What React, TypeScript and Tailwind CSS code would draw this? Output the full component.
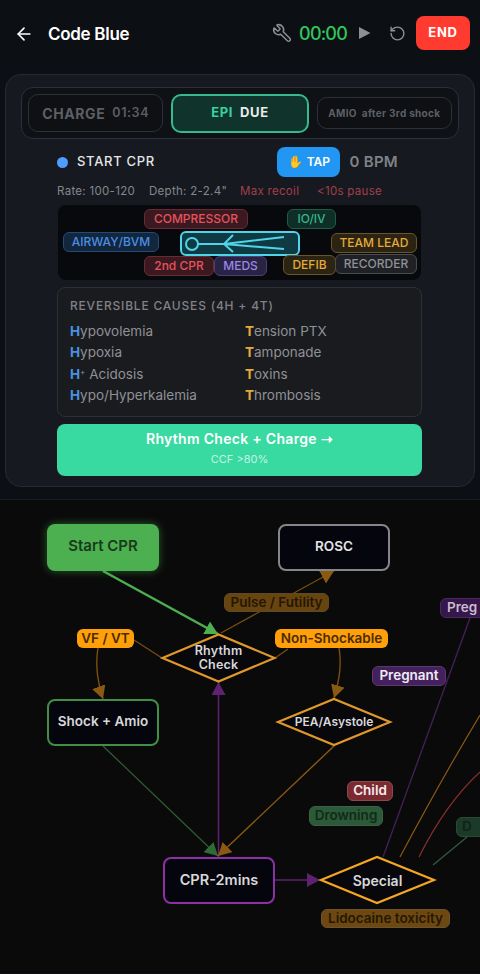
import { ArrowLeft, RotateCcw, Wrench } from 'lucide-react'

const font = "font-['Inter',sans-serif]"

function Chip({ label, className }: { label: string; className: string }) {
  return (
    <div className={`absolute flex h-5 items-center justify-center rounded-md border text-[12px] font-medium ${className}`}>
      {label}
    </div>
  )
}

function Cause({ letter, rest, color }: { letter: string; rest: React.ReactNode; color: string }) {
  return (
    <div className="h-[21.3px] text-[13.5px] leading-[21px] text-[#8f9196]">
      <span className={`font-bold ${color}`}>{letter}</span>
      {rest}
    </div>
  )
}

function Tag({ label, className }: { label: string; className: string }) {
  return (
    <div className={`absolute flex items-center justify-center whitespace-nowrap rounded-md text-[13.5px] font-semibold leading-none ${className}`}>
      {label}
    </div>
  )
}

function NodeBox({ label, className }: { label: string; className: string }) {
  return (
    <div className={`absolute flex h-[47px] w-[112px] items-center justify-center rounded-lg pb-[2px] font-semibold ${className}`}>
      {label}
    </div>
  )
}

function Arrow({ id, color }: { id: string; color: string }) {
  return (
    <marker id={id} markerWidth="13" markerHeight="14" refX="13" refY="7" orient="auto" markerUnits="userSpaceOnUse">
      <path d="M0 0L13 7L0 14Z" fill={color} />
    </marker>
  )
}

function Flow() {
  return (
    <div className="relative h-[474px] overflow-hidden border-t border-[#1b1d21] bg-[#0a0a0a]">
      <svg className="absolute left-0 top-0" width="480" height="474" viewBox="0 500 480 474" fill="none">
        <defs>
          <Arrow id="green" color="#4caf50" />
          <Arrow id="dgreen" color="#2f6b33" />
          <Arrow id="orange" color="#8a5a12" />
          <Arrow id="purple" color="#5f2272" />
        </defs>
        <path d="M103 571L218 634" stroke="#4caf50" strokeWidth="2.5" markerEnd="url(#green)" />
        <path d="M221 633L334 571" stroke="#7a4f10" strokeWidth="1.2" markerEnd="url(#orange)" />
        <path d="M162 658L134 640" stroke="#7a4f10" strokeWidth="1.2" />
        <path d="M98 648C95 665 98 685 103 699" stroke="#7a4f10" strokeWidth="1.4" markerEnd="url(#orange)" />
        <path d="M275 658L288 649" stroke="#7a4f10" strokeWidth="1.2" />
        <path d="M339 648C342 665 339 682 334 698" stroke="#7a4f10" strokeWidth="1.4" markerEnd="url(#orange)" />
        <path d="M218.500 857L218.500 682" stroke="#5f2272" strokeWidth="1.5" markerEnd="url(#purple)" />
        <path d="M103 746L218 856" stroke="#2f5f32" strokeWidth="1.2" markerEnd="url(#dgreen)" />
        <path d="M334 746L218 856" stroke="#8a5a12" strokeWidth="1.4" markerEnd="url(#orange)" />
        <path d="M274 880L320 880" stroke="#5f2272" strokeWidth="1.5" markerEnd="url(#purple)" />
        <path d="M383 857L470 618" stroke="#45205a" strokeWidth="1.3" />
        <path d="M400 857C425 810 450 765 480 715" stroke="#8a5a12" strokeWidth="1.2" />
        <path d="M419 857C435 825 455 795 480 772" stroke="#8a3030" strokeWidth="1.2" />
        <path d="M433 865L467 837" stroke="#2f5f40" strokeWidth="1.2" />
        <path d="M162.500 658L218.500 634.500L274.500 658L218.500 681.500Z" fill="#07070c" stroke="#e0982a" strokeWidth="2.2" />
        <path d="M278 722L334 699L390 722L334 745Z" fill="#07070c" stroke="#e0982a" strokeWidth="2.2" />
        <path d="M321 880L377 857L434 880L377 903Z" fill="#07070c" stroke="#f5a623" strokeWidth="2.2" />
      </svg>

      <NodeBox label="Start CPR" className="left-[47px] top-[24px] bg-[#4caf50] text-[15px] text-[#1a3a1c] shadow-[0_0_8px_rgba(76,175,80,0.5)]" />
      <NodeBox label="ROSC" className="left-[278px] top-[24px] border-2 border-[#85868a] bg-[#05050d] text-[13.5px] text-[#e4e4e6]" />
      <NodeBox label="Shock + Amio" className="left-[47px] top-[199px] border-2 border-[#3f8f45] bg-[#05050d] text-[13.5px] text-[#d8d8da]" />
      <NodeBox label="CPR-2mins" className="left-[163px] top-[357px] border-2 border-[#8e2fa5] bg-[#05050d] text-[14.5px] text-[#d8d8da]" />

      <div className="absolute left-[162px] top-[134px] flex h-[48px] w-[113px] items-center justify-center text-center text-[12.5px] font-semibold leading-[14px] tracking-[0.2px] text-[#d8d8da]">
        Rhythm
        <br />
        Check
      </div>
      <div className="absolute left-[277px] top-[198px] flex h-[48px] w-[114px] items-center justify-center text-[12px] font-semibold text-[#d8d8da]">
        PEA/Asystole
      </div>
      <div className="absolute left-[320px] top-[356px] flex h-[48px] w-[115px] items-center justify-center text-[14px] font-semibold text-[#d8d8da]">
        Special
      </div>

      <Tag label="Pulse / Futility" className="left-[224px] top-[93px] h-[19px] w-[105px] border border-[#5d4a2a] bg-[#68440f] text-[#241804]" />
      <Tag label="VF / VT" className="left-[77px] top-[129px] h-[19px] w-[57px] bg-[#ff9f0a] text-[#4a2c00]" />
      <Tag label="Non-Shockable" className="left-[275px] top-[129px] h-[19px] w-[113px] bg-[#ff9f0a] text-[#4a2c00]" />
      <Tag label="Preg" className="left-[440px] top-[98px] h-[20px] w-[60px] justify-start border border-[#4a2a60] bg-[#36174a] pl-[6px] text-[#c9bcd0]" />
      <Tag label="Pregnant" className="left-[372px] top-[166px] h-[20px] w-[74px] border border-[#5a3a72] bg-[#44205c] text-[#f0eaf4]" />
      <Tag label="Child" className="left-[347px] top-[281px] h-[20px] w-[46px] border border-[#8a4a50] bg-[#7c2a32] text-[#f5ecec]" />
      <Tag label="Drowning" className="left-[309px] top-[306px] h-[20px] w-[74px] border border-[#3f5f48] bg-[#2a5a38] text-[#122a18]" />
      <Tag label="D" className="left-[456px] top-[317px] h-[20px] w-[40px] justify-start border border-[#2a4a36] bg-[#1c3a28] pl-[5px] text-[#0f2416]" />
      <Tag label="Lidocaine toxicity" className="left-[321px] top-[409px] h-[19px] w-[129px] border border-[#6a5530] bg-[#6e4810] text-[#241804]" />
    </div>
  )
}

export default function App() {
  return (
    <div className={`h-[974px] w-[480px] overflow-hidden bg-[#0c0f14] ${font}`}>
      <header className="flex h-[66px] items-center pl-[14px] pr-[10px]">
        <ArrowLeft className="mt-[1px] size-[20px] text-white" strokeWidth={2} />
        <h1 className="ml-[14px] mt-[3px] text-[17px] font-semibold tracking-[-0.3px] text-white">Code Blue</h1>
        <div className="ml-auto flex items-center">
          <Wrench className="size-[20px] -scale-x-100 text-[#8e8e93]" strokeWidth={1.8} />
          <span className="ml-[7px] text-[18px] font-medium tracking-[-0.8px] text-[#30c85a]">00:00</span>
          <svg className="ml-[12px]" width="12" height="14" viewBox="0 0 12 14">
            <path d="M0 1L11.500 7L0 13Z" fill="#8e8e93" />
          </svg>
          <RotateCcw className="ml-[18px] size-[17px] text-[#8e8e93]" strokeWidth={2} />
          <button className="ml-[10px] h-[34px] w-[54px] rounded-lg bg-[#ff3b30] text-[13px] font-bold tracking-[0.8px] text-white">END</button>
        </div>
      </header>

      <section className="mx-[5px] mt-[8px] h-[413px] rounded-2xl border border-[#272a30] bg-[#16191f] px-[15px] pt-[12px]">
        <div className="flex h-[52px] items-center gap-[8px] rounded-xl border border-[#2d3036] bg-[#0e1116] px-[6px]">
          <div className="flex h-[38px] flex-1 items-center justify-center gap-[7px] rounded-[10px] border border-[#2d3036] bg-[#0e1014] font-bold text-[#5c5f64]">
            <span className="text-[14px] tracking-[0.6px]">CHARGE</span>
            <span className="text-[12.5px] font-semibold tracking-[0.6px]">01:34</span>
          </div>
          <div className="flex h-[39px] flex-1 items-center justify-center gap-[7px] rounded-[10px] border-2 border-[#36b98d] bg-[#10332c] text-[13px] font-bold tracking-[0.6px]">
            <span className="text-[#38d39f]">EPI</span>
            <span className="text-[#e8ecea]">DUE</span>
          </div>
          <div className="flex h-[32px] flex-1 items-center justify-center gap-[5px] rounded-[10px] border border-[#2d3036] bg-[#0e1014] text-[10px] font-bold tracking-[0.3px] text-[#5c5f64]">
            <span>AMIO</span>
            <span>after 3rd shock</span>
          </div>
        </div>

        <div className="mt-[8px] flex h-[30px] items-center pl-[36px]">
          <span className="size-[11px] rounded-full bg-[#4f9dff]" />
          <span className="ml-[9px] text-[13px] font-medium tracking-[0.7px] text-[#e4e6e8]">START CPR</span>
          <button className="ml-auto flex h-[30px] w-[63px] items-center justify-center gap-[4px] rounded-lg bg-[#2196f3] text-[12px] font-semibold text-white">
            <span className="text-[12px]">✋</span>TAP
          </button>
          <span className="ml-[9px] mr-[61px] text-[15px] font-semibold tracking-[0.3px] text-[#808287]">0 BPM</span>
        </div>

        <div className="mt-[7px] flex h-[16px] items-center pl-[36px] text-[11.500px] tracking-[0.3px] text-[#85878c]">
          <span className="w-[92px]">Rate: 100-120</span>
          <span className="w-[91px]">Depth: 2-2.4"</span>
          <span className="w-[77px] text-[#a3404a]">Max recoil</span>
          <span className="text-[#a3404a]">&lt;10s pause</span>
        </div>

        <div className="relative ml-[37px] mt-[5px] h-[75px] w-[363px] rounded-lg bg-[#07090d]">
          <Chip label="COMPRESSOR" className="left-[86px] top-[4px] w-[104px] border-[#6b2a32] bg-[#3a1a20] text-[#e5535c]" />
          <Chip label="IO/IV" className="left-[229px] top-[4px] w-[49px] border-[#1c5c48] bg-[#0f2e26] text-[#35b58d]" />
          <Chip label="AIRWAY/BVM" className="left-[5px] top-[27px] w-[96px] border-[#234a75] bg-[#12263e] text-[#4a90e2]" />
          <div className="absolute left-[122px] top-[26px] h-[25px] w-[120px] rounded-md border-2 border-[#4fd4e8] bg-[#0f3a44]">
            <svg className="absolute left-0 top-0" width="116" height="21" viewBox="0 0 116 21" fill="none" stroke="#4fd4e8" strokeWidth="2">
              <circle cx="10" cy="11" r="6" />
              <path d="M16 11H42M51 2L42 11L51 19M42 11L102 4M42 11L102 16" />
            </svg>
          </div>
          <Chip label="TEAM LEAD" className="left-[273px] top-[28px] w-[86px] border-[#6b5526] bg-[#2c2412] text-[#e5a93c]" />
          <Chip label="2nd CPR" className="left-[86px] top-[51px] w-[70px] border-[#6b2a32] bg-[#3a1a20] text-[#e5535c]" />
          <Chip label="MEDS" className="left-[156px] top-[51px] w-[53px] border-[#4a3f78] bg-[#2a2444] text-[#9c84e8]" />
          <Chip label="DEFIB" className="left-[225px] top-[50px] w-[53px] border-[#6b5526] bg-[#2c2412] text-[#e5a93c]" />
          <Chip label="RECORDER" className="left-[277px] top-[49px] w-[82px] border-[#4a4c52] bg-[#1f2126] text-[#8f9196]" />
        </div>

        <div className="ml-[36px] mt-[7px] h-[130px] w-[365px] rounded-lg border border-[#2e3035] bg-[#1a1b1f] px-[12px] pt-[9px]">
          <div className="text-[12px] font-medium tracking-[0.8px] text-[#808287]">REVERSIBLE CAUSES (4H + 4T)</div>
          <div className="mt-[6px] grid grid-cols-[175px_1fr]">
            <div>
              <Cause letter="H" rest="ypovolemia" color="text-[#4a90e2]" />
              <Cause letter="H" rest="ypoxia" color="text-[#4a90e2]" />
              <Cause letter="H" rest={<><sup className="text-[8px]">+</sup> Acidosis</>} color="text-[#4a90e2]" />
              <Cause letter="H" rest="ypo/Hyperkalemia" color="text-[#4a90e2]" />
            </div>
            <div>
              <Cause letter="T" rest="ension PTX" color="text-[#e5a93c]" />
              <Cause letter="T" rest="amponade" color="text-[#e5a93c]" />
              <Cause letter="T" rest="oxins" color="text-[#e5a93c]" />
              <Cause letter="T" rest="hrombosis" color="text-[#e5a93c]" />
            </div>
          </div>
        </div>

        <button className="ml-[36px] mt-[7px] flex h-[52px] w-[365px] flex-col items-center justify-center rounded-lg bg-[#39d9a2] pb-[5px] text-white">
          <span className="text-[14px] font-semibold leading-[20px] tracking-[0.3px]">Rhythm Check + Charge ➝</span>
          <span className="mt-[3px] text-[11px] leading-[14px] text-[#c4f3e2]">CCF &gt;80%</span>
        </button>
      </section>

      <div className="mt-[12px]">
        <Flow />
      </div>
    </div>
  )
}
